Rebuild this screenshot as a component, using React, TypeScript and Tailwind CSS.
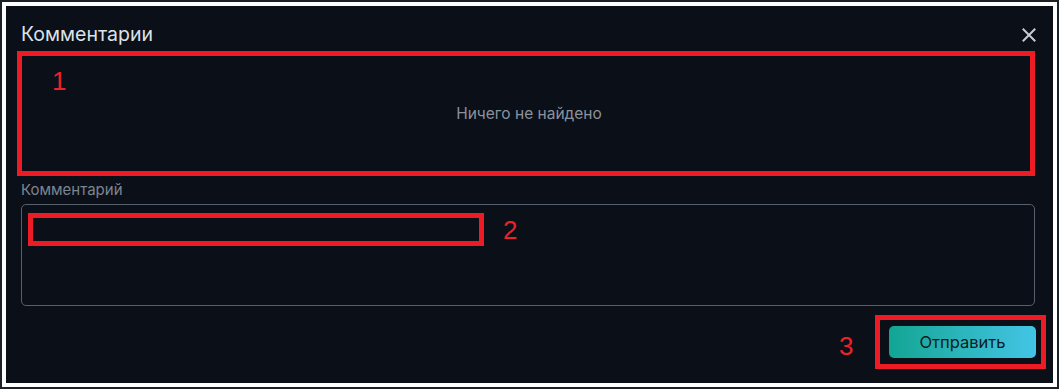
import React from 'react';

const Mark: React.FC<{ n: string; className: string }> = ({ n, className }) => (
    <span className={`absolute text-[26px] leading-none text-[#e8232a] ${className}`} style={{ fontFamily: '"Liberation Sans", Arial, sans-serif' }}>
        {n}
    </span>
);

const App: React.FC = () => {
    return (
        <div className="w-[1059px] h-[389px] border-2 border-[#1c2027] bg-white p-1" style={{ fontFamily: 'Inter, "Noto Sans", sans-serif' }}>
            <div className="relative h-full bg-[#0b0f17] pl-[15px] pr-[18px] flex flex-col">
                {/* header */}
                <div className="flex items-center justify-between pt-[15px]">
                    <h2 className="text-[19.5px] leading-[27px] text-[#dde2e8]">Комментарии</h2>
                    <button className="mr-[-1px] mt-[1px] text-[#c8ccd2]">
                        <svg width="14" height="14" viewBox="0 0 14 14" fill="none" stroke="currentColor" strokeWidth="2" strokeLinecap="square">
                            <path d="M1.5 1.5 L12.5 12.5 M12.5 1.5 L1.5 12.5" />
                        </svg>
                    </button>
                </div>

                {/* comments list (empty) */}
                <div className="relative mt-[3px] -ml-[4px] h-[125px] border-[5px] border-[#ed1c24] flex items-center justify-center">
                    <span className="text-[15.5px] text-[#8a929e] pl-[6px]">Ничего не найдено</span>
                    <Mark n="1" className="left-[30px] top-[12px]" />
                </div>

                {/* new comment */}
                <label className="mt-[5px] text-[15px] leading-[18px] text-[#7b8592]">Комментарий</label>
                <div className="relative mt-[5px] h-[102px] rounded-[5px] border border-[#56606c]">
                    <div className="ml-[6px] mt-[8px] w-[456px] h-[33px] border-[5px] border-[#ed1c24]" />
                    <Mark n="2" className="left-[481px] top-[12px]" />
                </div>

                {/* footer */}
                <div className="flex justify-end mt-[20px] -mr-[1px]">
                    <div className="relative">
                        <button className="w-[147px] h-[32px] rounded-[5px] bg-gradient-to-r from-[#10a593] to-[#42c5e6] text-[16.5px] text-[#0c1a22]">
                            Отправить
                        </button>
                        <div className="absolute -left-[14px] -right-[10px] -top-[11px] -bottom-[11px] border-[5px] border-[#ed1c24]" />
                        <Mark n="3" className="-left-[50px] top-[7px]" />
                    </div>
                </div>
            </div>
        </div>
    );
};

export default App;
